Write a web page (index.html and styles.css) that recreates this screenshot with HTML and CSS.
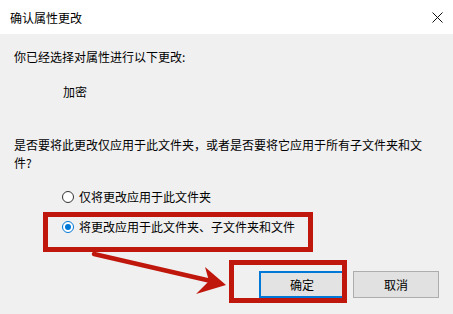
FILE: index.html
```html
<!DOCTYPE html>
<html lang="zh-CN">
<head>
<meta charset="utf-8">
<title>确认属性更改</title>
<link rel="stylesheet" href="styles.css">
</head>
<body>
<div class="dialog">
  <div class="titlebar">
    <span class="title">确认属性更改</span>
    <svg class="close" width="11" height="11" viewBox="0 0 11 11"><path d="M0.5 0.5 L10.5 10.5 M10.5 0.5 L0.5 10.5" stroke="#111" stroke-width="1" fill="none"/></svg>
  </div>
  <div class="body">
    <p class="line">你已经选择对属性进行以下更改:</p>
    <p class="line attr">加密</p>
    <p class="line question">是否要将此更改仅应用于此文件夹，或者是否要将它应用于所有子文件夹和文件?</p>
    <div class="options">
      <label class="option"><span class="radio"></span><span>仅将更改应用于此文件夹</span></label>
      <label class="option marked"><span class="radio checked"></span><span>将更改应用于此文件夹、子文件夹和文件</span></label>
    </div>
    <div class="footer">
      <svg class="arrow" width="142" height="50" viewBox="88 248 142 50">
        <line x1="94" y1="254" x2="211" y2="281" stroke="#c0170d" stroke-width="4.5" stroke-linecap="round"/>
        <polygon points="205,267 226,285 196,294 209,281" fill="#c0170d"/>
      </svg>
      <div class="ok-wrap"><button class="btn ok">确定</button></div>
      <button class="btn">取消</button>
    </div>
  </div>
</div>
</body>
</html>
```
FILE: styles.css
```css
* { box-sizing: border-box; }
html, body {
  margin: 0;
  padding: 0;
  width: 453px;
  height: 314px;
  overflow: hidden;
  background: #f0f0f0;
  font-family: "Noto Sans CJK SC", "Microsoft YaHei", sans-serif;
  font-size: 12px;
  color: #000;
}
.dialog { width: 453px; height: 314px; }
.titlebar {
  height: 34px;
  background: #fff;
  display: flex;
  align-items: center;
  justify-content: space-between;
  padding: 0 10px 0 10px;
}
.title { line-height: 18px; margin-top: 2px; }
.close { margin-top: 1px; }
.body {
  padding: 14px 25px 0 14px;
}
.line {
  margin: 0;
  line-height: 18px;
}
.attr {
  margin-top: 17px;
  padding-left: 49px;
}
.question {
  margin-top: 35px;
}
.options {
  margin-top: 16px;
  padding-left: 48px;
  display: flex;
  flex-direction: column;
  gap: 12px;
}
.option {
  display: flex;
  align-items: center;
  gap: 5px;
  line-height: 18px;
  position: relative;
}
.radio {
  width: 12px;
  height: 12px;
  border: 1px solid #333;
  border-radius: 50%;
  background: #fff;
  display: inline-flex;
  align-items: center;
  justify-content: center;
  flex: none;
}
.radio.checked { border-color: #0078d7; }
.radio.checked::after {
  content: "";
  width: 6px;
  height: 6px;
  border-radius: 50%;
  background: #0078d7;
}
.marked::after {
  content: "";
  position: absolute;
  left: -19px;
  top: -6px;
  width: 260px;
  height: 30px;
  border: 5px solid #c0170d;
}
.footer {
  margin-top: 35px;
  margin-right: -11px;
  display: flex;
  justify-content: flex-end;
  gap: 8px;
  position: relative;
}
.arrow {
  position: absolute;
  left: 74px;
  top: -23px;
}
.ok-wrap { position: relative; }
.ok-wrap::after {
  content: "";
  position: absolute;
  left: -30px;
  top: -11px;
  right: -2px;
  bottom: -5px;
  border: 5px solid #c0170d;
}
.btn {
  width: 86px;
  height: 27px;
  padding: 0;
  font: inherit;
  font-size: 12px;
  color: #000;
  background: #e1e1e1;
  border: 1px solid #adadad;
  display: block;
}
.ok {
  border: 2px solid #0078d7;
  background: #e3e3e3;
}
```
